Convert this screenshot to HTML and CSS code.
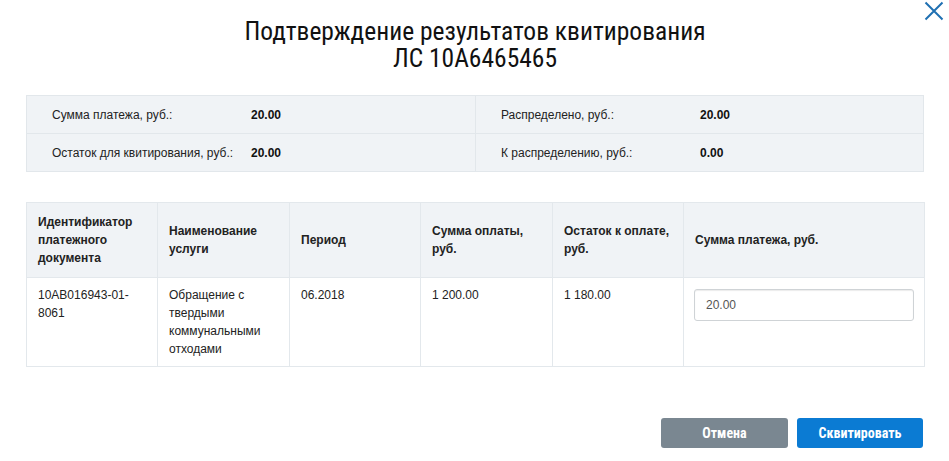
FILE: index.html
```html
<!DOCTYPE html>
<html lang="ru">
<head>
<meta charset="utf-8">
<link rel="stylesheet" href="styles.css">
</head>
<body>
<div class="modal">
  <button class="close" aria-label="Закрыть">
    <svg width="20" height="20" viewBox="0 0 20 20"><path d="M1.5 1.5 L18.5 18.5 M18.5 1.5 L1.5 18.5" stroke="#1f70b2" stroke-width="2" fill="none"/></svg>
  </button>
  <h1 class="title">Подтверждение результатов квитирования<br>ЛС 10А6465465</h1>

  <div class="summary">
    <div class="sum-col">
      <div class="sum-row"><span class="sum-label">Сумма платежа, руб.:</span><span class="sum-value">20.00</span></div>
      <div class="sum-row"><span class="sum-label">Остаток для квитирования, руб.:</span><span class="sum-value">20.00</span></div>
    </div>
    <div class="sum-col">
      <div class="sum-row"><span class="sum-label">Распределено, руб.:</span><span class="sum-value">20.00</span></div>
      <div class="sum-row"><span class="sum-label">К распределению, руб.:</span><span class="sum-value">0.00</span></div>
    </div>
  </div>

  <table class="grid">
    <colgroup>
      <col class="c1"><col class="c2"><col class="c3"><col class="c4"><col class="c5"><col class="c6">
    </colgroup>
    <thead>
      <tr>
        <th>Идентификатор платежного документа</th>
        <th>Наименование услуги</th>
        <th>Период</th>
        <th>Сумма оплаты, руб.</th>
        <th>Остаток к оплате, руб.</th>
        <th>Сумма платежа, руб.</th>
      </tr>
    </thead>
    <tbody>
      <tr>
        <td>10AB016943-01-8061</td>
        <td>Обращение с твердыми коммунальными отходами</td>
        <td>06.2018</td>
        <td>1 200.00</td>
        <td>1 180.00</td>
        <td class="input-cell"><input class="amount" type="text" value="20.00"></td>
      </tr>
    </tbody>
  </table>

  <div class="actions">
    <button class="btn btn-cancel">Отмена</button>
    <button class="btn btn-primary">Сквитировать</button>
  </div>
</div>
</body>
</html>
```

FILE: styles.css
```css
html, body {
  margin: 0;
  padding: 0;
  background: #ffffff;
}

body {
  font-family: "Liberation Sans", Arial, sans-serif;
  color: #222;
  width: 949px;
  height: 461px;
  overflow: hidden;
}

.modal {
  position: relative;
  padding: 18px 25px 0 26px;
}

.close {
  position: absolute;
  top: 0;
  right: 4px;
  width: 22px;
  height: 22px;
  padding: 1px;
  border: 0;
  background: transparent;
  cursor: pointer;
}

.title {
  margin: 0 0 23px;
  font-family: "Roboto Condensed", "Liberation Sans Narrow", Roboto, sans-serif;
  font-stretch: condensed;
  font-weight: 400;
  font-size: 25.5px;
  line-height: 27px;
  text-align: center;
  color: #111;
}

.summary {
  display: grid;
  grid-template-columns: 1fr 1fr;
  background: #f0f3f6;
  border: 1px solid #e2e7eb;
}

.sum-col + .sum-col {
  border-left: 1px solid #e2e7eb;
}

.sum-row {
  display: flex;
  align-items: center;
  height: 37px;
  padding-left: 25px;
  font-size: 12px;
}

.sum-row + .sum-row {
  border-top: 1px solid #e2e7eb;
}

.sum-label {
  width: 199px;
  color: #222;
}

.sum-value {
  font-weight: 700;
  color: #111;
}

.grid {
  margin-top: 30px;
  width: 898px;
  border-collapse: collapse;
  table-layout: fixed;
  font-size: 12px;
  line-height: 18px;
}

.c1 { width: 131px; }
.c2 { width: 132px; }
.c3 { width: 131px; }
.c4 { width: 132px; }
.c5 { width: 131px; }
.c6 { width: 241px; }

.grid th,
.grid td {
  border: 1px solid #e3e8ec;
  text-align: left;
  padding: 8px 11px;
  color: #222;
}

.grid th {
  background: #f0f3f6;
  font-weight: 700;
  vertical-align: middle;
  padding: 10px 11px;
}

.grid td {
  vertical-align: top;
  height: 72px;
}

.grid td.input-cell {
  padding: 11px 10px 0 10px;
}

.amount {
  box-sizing: border-box;
  width: 220px;
  height: 32px;
  padding: 0 11px;
  border: 1px solid #cfd3d6;
  border-radius: 3px;
  box-shadow: inset 0 1px 1px rgba(0,0,0,0.08);
  font-family: "Liberation Sans", Arial, sans-serif;
  font-size: 12px;
  color: #555;
  background: #fff;
}

.actions {
  display: flex;
  justify-content: flex-end;
  gap: 9px;
  margin-top: 51px;
  padding-right: 1px;
}

.btn {
  width: 127px;
  height: 30px;
  border: 0;
  border-radius: 3px;
  color: #fff;
  font-family: "Roboto Condensed", "Liberation Sans Narrow", Roboto, sans-serif;
  font-stretch: condensed;
  font-weight: 700;
  font-size: 14px;
  cursor: pointer;
}

.btn-cancel {
  background: #7a8791;
}

.btn-primary {
  width: 126px;
  background: #0b7bd3;
}
```
